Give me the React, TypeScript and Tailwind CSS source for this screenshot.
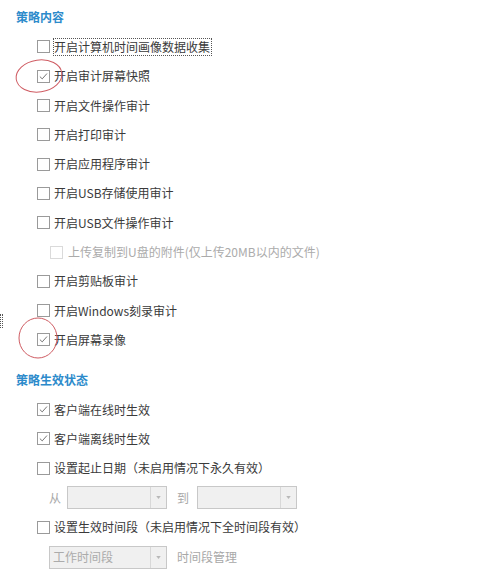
import React from "react"

const font = { fontFamily: '"Noto Sans CJK SC", "Noto Sans", sans-serif' }

function Box({ checked, disabled }: { checked?: boolean; disabled?: boolean }) {
  return (
    <span
      className={`flex items-center justify-center w-[13px] h-[13px] border bg-white shrink-0 ${
        disabled ? "border-[#dadada]" : "border-[#9a9a9a]"
      }`}
    >
      {checked && (
        <svg viewBox="0 0 13 13" className="w-[11px] h-[11px]">
          <path d="M2.2 6.6 L5 9.3 L10.6 3" fill="none" stroke="#6a6a6a" strokeWidth="1.1" />
        </svg>
      )}
    </span>
  )
}

function Row({
  label,
  checked,
  focused,
  sub,
  disabled,
}: {
  label: string
  checked?: boolean
  focused?: boolean
  sub?: boolean
  disabled?: boolean
}) {
  return (
    <div className={`flex items-center h-[29.3px] ${sub ? "pl-[50px]" : "pl-[37px]"}`}>
      <Box checked={checked} disabled={disabled} />
      <span
        className={`text-[12px] leading-[16px] ${
          disabled ? "text-[#ababab]" : "text-[#3a3a3a]"
        } ${focused ? "outline outline-1 outline-dotted outline-[#555] pr-[1px]" : ""} ${sub ? "ml-[5px]" : "ml-[4px]"}`}
      >
        {label}
      </span>
    </div>
  )
}

function Select({ width, text }: { width: string; text?: string }) {
  return (
    <div className={`flex items-center h-[23px] border border-[#c8c8c8] bg-[#f0f0f0] ${width}`}>
      <span className="flex-1 pl-[3px] text-[12px] text-[#ababab]">{text}</span>
      <span className="flex items-center justify-center w-[16px] h-full border-l border-[#d8d8d8]">
        <svg viewBox="0 0 6 4" className="w-[5px] h-[3px]">
          <path d="M0 0 L6 0 L3 4 Z" fill="#b8b8b8" />
        </svg>
      </span>
    </div>
  )
}

export default function App() {
  return (
    <div className="relative w-[480px] h-[576px] bg-white overflow-hidden pt-[2px]" style={font}>
      {/* 策略内容 */}
      <div className="flex items-center h-[29.3px] pl-[16px] text-[12px] font-bold text-[#2d8bcb]">策略内容</div>
      <div className="mt-[1px]">
        <Row label="开启计算机时间画像数据收集" focused />
        <Row label="开启审计屏幕快照" checked />
        <Row label="开启文件操作审计" />
        <Row label="开启打印审计" />
        <Row label="开启应用程序审计" />
        <Row label="开启USB存储使用审计" />
        <Row label="开启USB文件操作审计" />
        <Row label="上传复制到U盘的附件(仅上传20MB以内的文件)" sub disabled />
        <Row label="开启剪贴板审计" />
        <Row label="开启Windows刻录审计" />
        <Row label="开启屏幕录像" checked />
      </div>

      {/* 策略生效状态 */}
      <div className="flex items-center h-[29.3px] mt-[11px] pl-[16px] text-[12px] font-bold text-[#2d8bcb]">
        策略生效状态
      </div>
      <Row label="客户端在线时生效" checked />
      <Row label="客户端离线时生效" checked />
      <Row label="设置起止日期（未启用情况下永久有效）" />
      <div className="flex items-center h-[30px] pl-[49px] text-[12px] text-[#a8a8a8]">
        <span className="w-[18px]">从</span>
        <Select width="w-[100px]" />
        <span className="ml-[10px] w-[20px]">到</span>
        <Select width="w-[100px]" />
      </div>
      <Row label="设置生效时间段（未启用情况下全时间段有效）" />
      <div className="flex items-center h-[30px] pl-[49px] text-[12px] text-[#a8a8a8]">
        <Select width="w-[118px]" text="工作时间段" />
        <span className="ml-[10px]">时间段管理</span>
      </div>

      {/* annotations */}
      <svg className="absolute left-0 top-0 pointer-events-none" width="480" height="576">
        <ellipse cx="39" cy="76" rx="23" ry="16" transform="rotate(-8 39 76)" fill="none" stroke="#cf5c63" strokeWidth="1" />
        <ellipse cx="38" cy="338" rx="19" ry="20" fill="none" stroke="#cf5c63" strokeWidth="1" />
      </svg>
      <div className="absolute left-0 top-[314px] w-[3px] h-[14px] border-l border-r border-dotted border-[#555]" />
    </div>
  )
}
